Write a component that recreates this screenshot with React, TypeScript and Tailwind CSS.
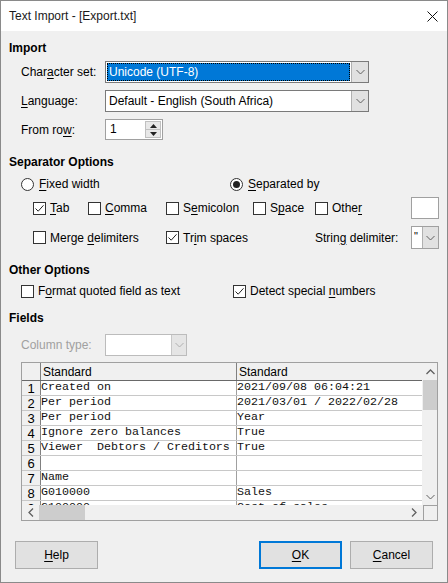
import React from "react";

const SANS = "font-['Liberation_Sans',Arial,sans-serif]";
const MONO = "font-['Liberation_Mono','Courier_New',monospace]";

function U({ children }: { children: React.ReactNode }) {
  return <span className="underline underline-offset-2">{children}</span>;
}

function Chevron({ color = "#606060" }: { color?: string }) {
  return (
    <svg width="9" height="6" viewBox="0 0 9 6">
      <path d="M0.5 1 L4.5 5 L8.5 1" fill="none" stroke={color} strokeWidth="1" />
    </svg>
  );
}

function Check({ checked = false, label }: { checked?: boolean; label: React.ReactNode }) {
  return (
    <div className="flex items-center gap-[4px]">
      <div className="w-[13px] h-[13px] border border-[#333] bg-white flex items-center justify-center shrink-0">
        {checked && (
          <svg width="11" height="11" viewBox="0 0 11 11">
            <path d="M1.5 5.5 L4.2 8.2 L9.5 2.3" fill="none" stroke="#222" strokeWidth="1" />
          </svg>
        )}
      </div>
      <span className="whitespace-nowrap">{label}</span>
    </div>
  );
}

function Radio({ checked = false, label }: { checked?: boolean; label: React.ReactNode }) {
  return (
    <div className="flex items-center gap-[5px]">
      <div className="w-[13px] h-[13px] rounded-full border border-[#333] bg-white flex items-center justify-center shrink-0">
        {checked && <div className="w-[7px] h-[7px] rounded-full bg-[#222]" />}
      </div>
      <span className="whitespace-nowrap">{label}</span>
    </div>
  );
}

const rows: [string, string][] = [
  ["Created on", "2021/09/08 06:04:21"],
  ["Per period", "2021/03/01 / 2022/02/28"],
  ["Per period", "Year"],
  ["Ignore zero balances", "True"],
  ["Viewer  Debtors / Creditors", "True"],
  ["", ""],
  ["Name", ""],
  ["G010000", "Sales"],
  ["G100000", "Cost of sales"],
];

function Table() {
  return (
    <div className="flex ml-[20px] w-[417px] h-[159px] border border-[#a0a0a0] bg-[#f0f0f0]">
      <div className="flex flex-col w-[400px] overflow-hidden">
        <div className="h-[142px] overflow-hidden">
          <div className="flex h-[18px] border-b border-[#696969]">
            <div className="w-[19px] border-r border-[#808080]" />
            <div className="w-[196px] border-r border-[#808080] pl-[2px] leading-[18px]">Standard</div>
            <div className="flex-1 pl-[2px] leading-[18px]">Standard</div>
          </div>
          {rows.map((r, i) => (
            <div key={i} className="flex h-[15px] border-b border-[#c8c8c8]">
              <div className="w-[19px] border-r border-[#808080] bg-[#f0f0f0] text-center text-[13px] leading-[15px]">
                {i + 1}
              </div>
              <div className={`w-[196px] border-r border-[#a0a0a0] bg-white ${MONO} text-[11.67px] leading-[13px] whitespace-pre overflow-hidden text-[#111]`}>
                {r[0]}
              </div>
              <div className={`flex-1 bg-white ${MONO} text-[11.67px] leading-[13px] whitespace-pre overflow-hidden text-[#111]`}>
                {r[1]}
              </div>
            </div>
          ))}
        </div>
        <div className="h-[15px] flex items-center bg-[#f0f0f0]">
          <div className="w-[17px] flex justify-center">
            <svg width="6" height="9" viewBox="0 0 6 9">
              <path d="M5 0.5 L1 4.5 L5 8.5" fill="none" stroke="#606060" strokeWidth="1.3" />
            </svg>
          </div>
          <div className="w-[46px] h-[15px] bg-[#cdcdcd]" />
          <div className="flex-1" />
          <div className="w-[17px] flex justify-center">
            <svg width="6" height="9" viewBox="0 0 6 9">
              <path d="M1 0.5 L5 4.5 L1 8.5" fill="none" stroke="#606060" strokeWidth="1.3" />
            </svg>
          </div>
        </div>
      </div>
      <div className="flex flex-col w-[15px] border-l border-[#f0f0f0]">
        <div className="h-[142px] flex flex-col">
          <div className="h-[17px] flex items-center justify-center">
            <svg width="9" height="6" viewBox="0 0 9 6">
              <path d="M0.5 5 L4.5 1 L8.5 5" fill="none" stroke="#606060" strokeWidth="1.3" />
            </svg>
          </div>
          <div className="h-[30px] bg-[#cdcdcd]" />
          <div className="flex-1" />
          <div className="h-[17px] flex items-center justify-center">
            <Chevron />
          </div>
        </div>
        <div className="h-[15px] border-t border-[#a0a0a0] border-l" />
      </div>
    </div>
  );
}

export default function App() {
  return (
    <div className={`w-[448px] h-[583px] border border-[#8a8a8a] bg-[#f0f0f0] flex flex-col text-[12px] text-black ${SANS}`}>
      {/* title bar */}
      <div className="h-[30px] bg-white flex items-center justify-between pl-[8px] pr-[9px] shrink-0">
        <span className="text-[12px] text-[#1a1a1a]">Text Import - [Export.txt]</span>
        <svg width="11" height="11" viewBox="0 0 11 11">
          <path d="M0.5 0.5 L10.5 10.5 M10.5 0.5 L0.5 10.5" stroke="#111" strokeWidth="1" />
        </svg>
      </div>

      {/* Import */}
      <div className="mt-[9px] h-[16px] pl-[8px] font-bold leading-[16px]">Import</div>
      <div className="mt-[5px] h-[22px] flex items-center pl-[20px]">
        <span className="w-[84px]">
          Char<U>a</U>cter set:
        </span>
        <div className="w-[264px] h-[22px] border border-[#7a7a7a] flex bg-white">
          <div className="flex-1 m-[1px] bg-[#0078d7] text-white pl-[2px] leading-[18px] outline outline-1 outline-dotted outline-black -outline-offset-1">
            Unicode (UTF-8)
          </div>
          <div className="w-[17px] bg-[#e1e1e1] border-l border-[#b0b0b0] flex items-center justify-center">
            <Chevron />
          </div>
        </div>
      </div>
      <div className="mt-[7px] h-[22px] flex items-center pl-[20px]">
        <span className="w-[84px]">
          <U>L</U>anguage:
        </span>
        <div className="w-[264px] h-[22px] border border-[#7a7a7a] flex bg-white">
          <div className="flex-1 pl-[3px] leading-[20px]">Default - English (South Africa)</div>
          <div className="w-[17px] bg-[#e1e1e1] border-l border-[#b0b0b0] flex items-center justify-center">
            <Chevron />
          </div>
        </div>
      </div>
      <div className="mt-[7px] h-[21px] flex items-center pl-[20px]">
        <span className="w-[84px]">
          From ro<U>w</U>:
        </span>
        <div className="w-[58px] h-[21px] border border-[#a0a0a0] flex bg-white">
          <div className="flex-1 pl-[4px] leading-[19px]">1</div>
          <div className="w-[16px] flex flex-col my-[1px] mr-[1px]">
            <div className="flex-1 bg-[#e8e8e8] border border-[#c0c0c0] flex items-center justify-center">
              <svg width="7" height="4" viewBox="0 0 7 4">
                <path d="M0 4 L3.5 0 L7 4 Z" fill="#222" />
              </svg>
            </div>
            <div className="flex-1 bg-[#e8e8e8] border border-[#c0c0c0] border-t-0 flex items-center justify-center">
              <svg width="7" height="4" viewBox="0 0 7 4">
                <path d="M0 0 L3.5 4 L7 0 Z" fill="#222" />
              </svg>
            </div>
          </div>
        </div>
      </div>

      {/* Separator Options */}
      <div className="mt-[14px] h-[16px] pl-[8px] font-bold leading-[16px]">Separator Options</div>
      <div className="mt-[6px] h-[16px] flex items-center pl-[20px]">
        <div className="w-[209px]">
          <Radio label={<><U>F</U>ixed width</>} />
        </div>
        <Radio checked label={<><U>S</U>eparated by</>} />
      </div>
      <div className="mt-[5px] h-[22px] flex items-center pl-[32px]">
        <div className="w-[55px]">
          <Check checked label={<><U>T</U>ab</>} />
        </div>
        <div className="w-[78px]">
          <Check label={<><U>C</U>omma</>} />
        </div>
        <div className="w-[87px]">
          <Check label={<>S<U>e</U>micolon</>} />
        </div>
        <div className="w-[62px]">
          <Check label={<>S<U>p</U>ace</>} />
        </div>
        <div className="w-[96px]">
          <Check label={<>Othe<U>r</U></>} />
        </div>
        <div className="w-[28px] h-[22px] bg-white border border-[#a0a0a0]" />
      </div>
      <div className="mt-[7px] h-[23px] flex items-center pl-[32px]">
        <div className="w-[133px]">
          <Check label={<>Merge <U>d</U>elimiters</>} />
        </div>
        <div className="w-[149px]">
          <Check checked label={<>Tr<U>i</U>m spaces</>} />
        </div>
        <div className="w-[96px] whitespace-nowrap">
          Strin<U>g</U> delimiter:
        </div>
        <div className="w-[28px] h-[23px] border border-[#a0a0a0] flex bg-white">
          <div className="w-[10px] pl-[2px] leading-[18px] text-[11px] text-black">"</div>
          <div className="flex-1 bg-[#e1e1e1] border-l border-[#b0b0b0] flex items-center justify-center">
            <Chevron />
          </div>
        </div>
      </div>

      {/* Other Options */}
      <div className="mt-[13px] h-[16px] pl-[8px] font-bold leading-[16px]">Other Options</div>
      <div className="mt-[5px] h-[16px] flex items-center pl-[20px]">
        <div className="w-[212px]">
          <Check label={<>F<U>o</U>rmat quoted field as text</>} />
        </div>
        <Check checked label={<>Detect special <U>n</U>umbers</>} />
      </div>

      {/* Fields */}
      <div className="mt-[11px] h-[16px] pl-[8px] font-bold leading-[16px]">Fields</div>
      <div className="mt-[8px] h-[22px] flex items-center pl-[20px]">
        <span className="w-[84px] text-[#a0a0a0]">Column type:</span>
        <div className="w-[82px] h-[22px] border border-[#bcbcbc] flex bg-white">
          <div className="flex-1" />
          <div className="w-[15px] bg-[#e5e5e5] border-l border-[#c8c8c8] flex items-center justify-center">
            <Chevron color="#b0b0b0" />
          </div>
        </div>
      </div>
      <div className="mt-[6px]">
        <Table />
      </div>

      {/* buttons */}
      <div className="mt-[20px] h-[28px] flex items-center pl-[14px]">
        <button className="w-[83px] h-[28px] bg-[#e1e1e1] border border-[#adadad]">
          <U>H</U>elp
        </button>
        <div className="w-[161px]" />
        <button className="w-[83px] h-[28px] bg-[#e1e1e1] border-2 border-[#0078d7]">
          <U>O</U>K
        </button>
        <div className="w-[8px]" />
        <button className="w-[83px] h-[28px] bg-[#e1e1e1] border border-[#adadad]">
          <U>C</U>ancel
        </button>
      </div>
    </div>
  );
}
